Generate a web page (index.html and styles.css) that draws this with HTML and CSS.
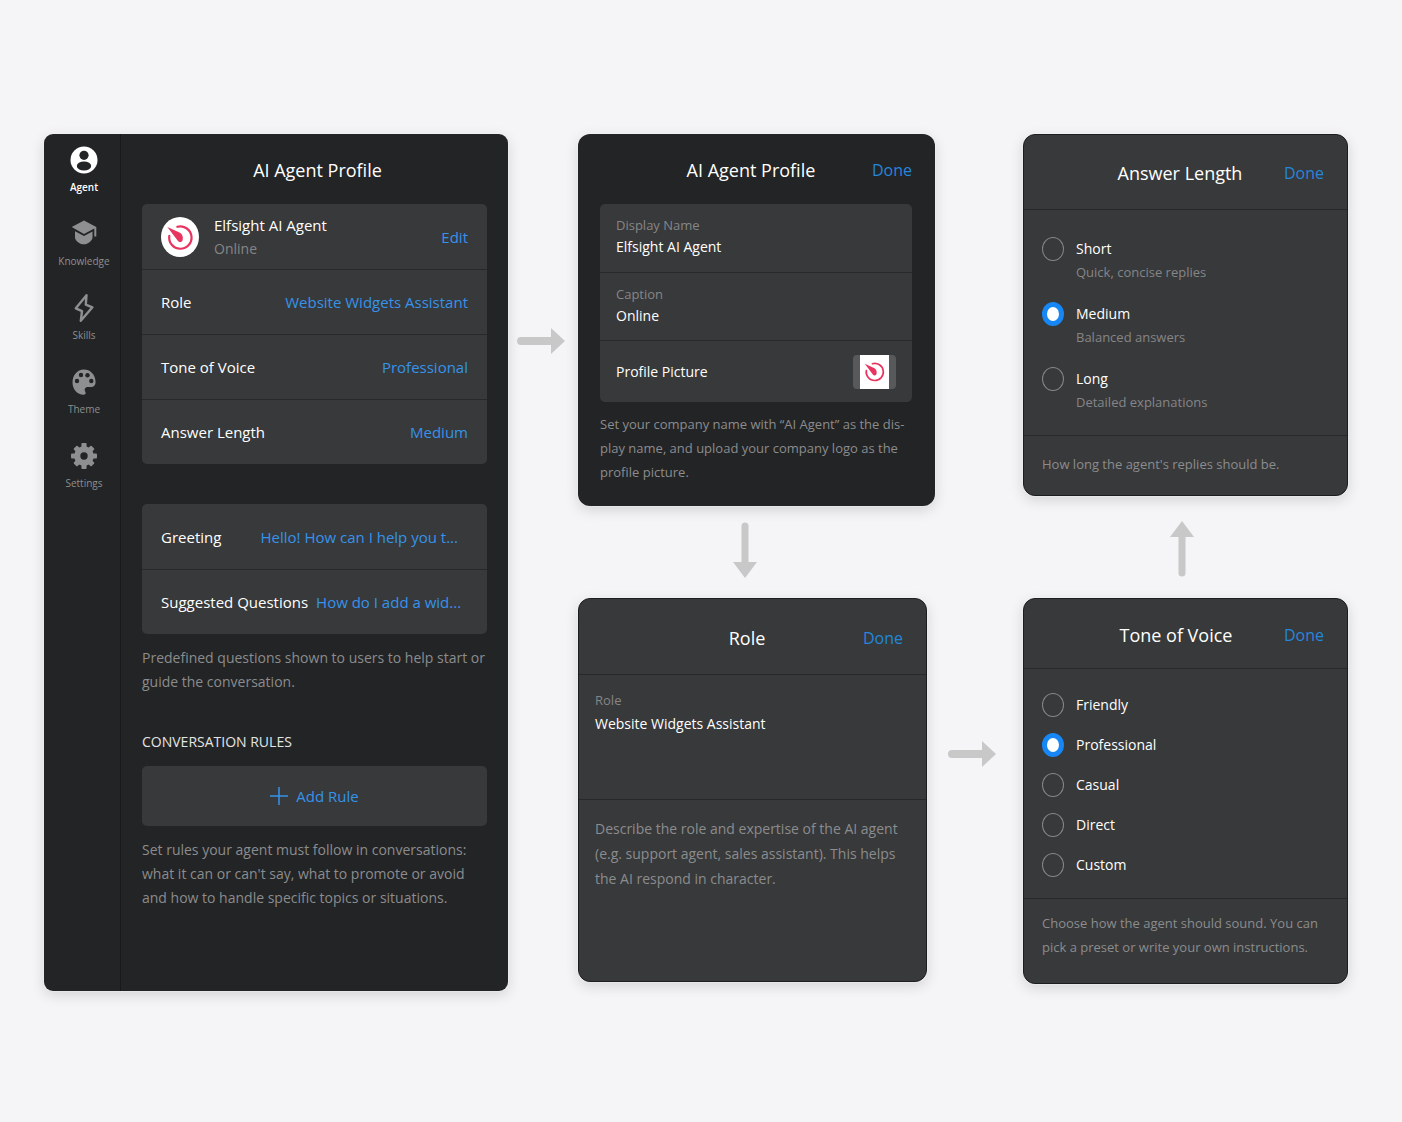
FILE: index.html
```html
<!DOCTYPE html>
<html lang="en">
<head>
<meta charset="utf-8">
<meta name="viewport" content="width=device-width, initial-scale=1">
<title>AI Agent Profile</title>
<link rel="stylesheet" href="styles.css">
</head>
<body>
<svg class="defs" aria-hidden="true">
  <symbol id="logo" viewBox="0 0 38 38">
    <path d="M16.300 8.800A11.200 11.200 0 1 1 8.300 17.800" fill="none" stroke="#e8355f" stroke-width="2.200" stroke-linecap="round"/>
    <path d="M6.300 9L19 14.800C21.600 16.300 22.600 20 21.400 22.800C20.400 24.600 18 24.600 16.800 22.800Z" fill="#e8355f"/>
  </symbol>
  <symbol id="arrow" viewBox="0 0 48 26">
    <path d="M4 13H35" stroke="#c8c8c9" stroke-width="8" stroke-linecap="round"/>
    <path d="M34 0L48 13L34 26Z" fill="#c8c8c9"/>
  </symbol>
  <symbol id="arrow-long" viewBox="0 0 56 24">
    <path d="M4 12H42" stroke="#c8c8c9" stroke-width="7" stroke-linecap="round"/>
    <path d="M40 0L56 12L40 24Z" fill="#c8c8c9"/>
  </symbol>
</svg>
<main class="flow">
  <section class="window agent">
    <nav class="sidebar" aria-label="Sections">
      <button class="tab tab-active" type="button">
        <svg class="tab-icon" viewBox="0 0 28 28"><circle cx="14" cy="14" r="13.500" fill="currentColor"/><circle cx="14" cy="9.300" r="4.600" fill="#232425"/><ellipse cx="14" cy="20" rx="7.200" ry="4.500" fill="#232425"/></svg>
        Agent
      </button>
      <button class="tab" type="button">
        <svg class="tab-icon" viewBox="0 0 28 28" fill="currentColor"><path d="M14 0.500L26.300 7V16.500H24.300V8.500L14 14L1.700 7Z"/><path d="M5 11.200L14 16L22.500 11.500V17.500C22.500 20.500 18 24.300 13.800 24.300C9.500 24.300 5 20.500 5 17.500Z"/></svg>
        Knowledge
      </button>
      <button class="tab" type="button">
        <svg class="tab-icon" viewBox="0 0 28 28" fill="none" stroke="currentColor" stroke-width="2.400" stroke-linejoin="round"><path d="M16.500 1.200L5.800 14.300L12 17.200L10.800 26.800L22.400 13.300L15.800 10.600Z"/></svg>
        Skills
      </button>
      <button class="tab" type="button">
        <svg class="tab-icon" viewBox="0 0 28 28"><path d="M14 1.500C7 1.500 2.500 7.500 2.500 14.500C2.500 21.500 7.500 26.800 13.500 26.800C15.800 26.800 16 25 15.300 23.800C13.800 20.800 15.500 19 18 19H21C24.500 19 25.800 16.500 25.500 13C25 6 20 1.500 14 1.500Z" fill="currentColor"/><g fill="#232425"><circle cx="11" cy="7" r="2.200"/><circle cx="17.500" cy="7.200" r="2.200"/><circle cx="7" cy="13" r="2.200"/><circle cx="21.300" cy="13" r="2.200"/></g></svg>
        Theme
      </button>
      <button class="tab" type="button">
        <svg class="tab-icon" viewBox="0 0 28 28"><g fill="currentColor"><circle cx="14" cy="14" r="9.800"/><rect x="11.400" y="1" width="5.200" height="26" rx="1"/><rect x="1" y="11.400" width="26" height="5.200" rx="1"/><g transform="rotate(45 14 14)"><rect x="11.400" y="1.500" width="5.200" height="25" rx="1"/><rect x="1.500" y="11.400" width="25" height="5.200" rx="1"/></g></g><circle cx="14" cy="14" r="3.700" fill="#232425"/></svg>
        Settings
      </button>
    </nav>
    <div class="agent-body">
      <header class="bar bar-plain"><h1 class="title">AI Agent Profile</h1></header>
      <div class="group">
        <div class="row">
          <span class="avatar"><svg class="avatar-logo"><use href="#logo"/></svg></span>
          <div class="identity"><div class="row-label">Elfsight AI Agent</div><div class="muted">Online</div></div>
          <button class="link" type="button">Edit</button>
        </div>
        <div class="row"><span class="row-label">Role</span><button class="link" type="button">Website Widgets Assistant</button></div>
        <div class="row"><span class="row-label">Tone of Voice</span><button class="link" type="button">Professional</button></div>
        <div class="row"><span class="row-label">Answer Length</span><button class="link" type="button">Medium</button></div>
      </div>
      <div class="group group-next">
        <div class="row row-cut"><span class="row-label">Greeting</span><button class="link" type="button">Hello! How can I help you t...</button></div>
        <div class="row row-tight"><span class="row-label">Suggested Questions</span><button class="link" type="button">How do I add a wid...</button></div>
      </div>
      <p class="hint">Predefined questions shown to users to help start or guide the conversation.</p>
      <h2 class="section-title">CONVERSATION RULES</h2>
      <button class="add" type="button">
        <svg class="plus" viewBox="0 0 18 18" stroke="currentColor" stroke-width="1.500"><path d="M9 0V18M0 9H18"/></svg>
        Add Rule
      </button>
      <p class="hint">Set rules your agent must follow in conversations: what it can or can't say, what to promote or avoid and how to handle specific topics or situations.</p>
    </div>
  </section>

  <div class="between between-first"><svg class="arrow"><use href="#arrow"/></svg></div>

  <div class="stack">
    <section class="window profile">
      <header class="bar bar-plain bar-profile"><h2 class="title">AI Agent Profile</h2><button class="link done" type="button">Done</button></header>
      <div class="group">
        <div class="field"><label class="muted" for="name">Display Name</label><input class="text" id="name" type="text" value="Elfsight AI Agent"></div>
        <div class="field"><label class="muted" for="caption">Caption</label><input class="text" id="caption" type="text" value="Online"></div>
        <div class="row row-picture"><span class="text">Profile Picture</span><button class="thumb" type="button" aria-label="Change profile picture"><span class="thumb-image"><svg class="thumb-logo"><use href="#logo"/></svg></span></button></div>
      </div>
      <p class="hint">Set your company name with “AI Agent” as the dis&shy;play name, and upload your company logo as the profile picture.</p>
    </section>
    <div class="below below-profile"><svg class="arrow arrow-down"><use href="#arrow-long"/></svg></div>
    <section class="window panel role">
      <header class="bar"><h2 class="title">Role</h2><button class="link done" type="button">Done</button></header>
      <div class="role-field"><label class="muted" for="role">Role</label><textarea class="text role-text" id="role" rows="3">Website Widgets Assistant</textarea></div>
      <p class="hint">Describe the role and expertise of the AI agent (e.g. support agent, sales assistant). This helps the AI respond in character.</p>
    </section>
  </div>

  <div class="between between-second"><svg class="arrow"><use href="#arrow"/></svg></div>

  <div class="stack">
    <section class="window panel length">
      <header class="bar"><h2 class="title">Answer Length</h2><button class="link done" type="button">Done</button></header>
      <div class="options">
        <label class="option"><input class="radio" type="radio" name="length"><span class="text">Short<small class="muted note">Quick, concise replies</small></span></label>
        <label class="option"><input class="radio" type="radio" name="length" checked><span class="text">Medium<small class="muted note">Balanced answers</small></span></label>
        <label class="option"><input class="radio" type="radio" name="length"><span class="text">Long<small class="muted note">Detailed explanations</small></span></label>
      </div>
      <p class="hint">How long the agent's replies should be.</p>
    </section>
    <div class="below below-length"><svg class="arrow arrow-up"><use href="#arrow-long"/></svg></div>
    <section class="window panel tone">
      <header class="bar"><h2 class="title">Tone of Voice</h2><button class="link done" type="button">Done</button></header>
      <div class="options">
        <label class="option"><input class="radio" type="radio" name="tone"><span class="text">Friendly</span></label>
        <label class="option"><input class="radio" type="radio" name="tone" checked><span class="text">Professional</span></label>
        <label class="option"><input class="radio" type="radio" name="tone"><span class="text">Casual</span></label>
        <label class="option"><input class="radio" type="radio" name="tone"><span class="text">Direct</span></label>
        <label class="option"><input class="radio" type="radio" name="tone"><span class="text">Custom</span></label>
      </div>
      <p class="hint">Choose how the agent should sound. You can pick a preset or write your own instructions.</p>
    </section>
  </div>
</main>
</body>
</html>
```

FILE: styles.css
```css
* { box-sizing: border-box; }

body {
  margin: 0;
  min-height: 100vh;
  background: #f5f5f7;
  color: #fff;
  font-family: "Open Sans", "Noto Sans", sans-serif;
  font-size: 15px;
  line-height: 24px;
}

h1, h2, p { margin: 0; font-weight: 400; }

button, input, textarea {
  margin: 0;
  padding: 0;
  border: 0;
  background: none;
  color: inherit;
  font: inherit;
}

button { cursor: pointer; }

.defs { display: none; }

.flow {
  display: grid;
  grid-template-columns: minmax(0, 464fr) 70px minmax(0, 357fr) 88px minmax(0, 325fr);
  align-items: start;
  padding: 134px 54px 131px 44px;
}

.window {
  border-radius: 12px;
  background: #232425;
  box-shadow: 0 0 2px #fff, 0 4px 14px rgba(0, 0, 0, 0.14);
}

.stack { display: flex; flex-direction: column; }

/* Arrows between the windows */
.arrow { display: block; width: 48px; height: 26px; }
.arrow-down { transform: rotate(90deg); }
.arrow-up { transform: rotate(-90deg); }
.between { display: flex; }
.between-first { padding: 194px 0 0 9px; }
.between-second { padding: 607px 0 0 13px; }
.below { display: flex; align-items: center; justify-content: center; }
.below .arrow { width: 56px; height: 24px; }
.below-profile { height: 92px; padding: 0 24px 4px 0; }
.below-length { height: 102px; padding: 4px 8px 0 0; }

/* Title bars */
.bar {
  display: flex;
  align-items: center;
  padding: 2px 23px 0 52px;
  border-bottom: 1px solid #27282a;
}
.bar-plain { height: 70px; padding: 2px 0 0 6px; border: 0; }
.bar-profile { padding-left: 30px; }
.title { flex: 1; font-size: 18px; text-align: center; }
.link { color: #3593ea; text-align: right; white-space: nowrap; }
.done { font-size: 16px; color: #2486dc; }

.muted { color: #858688; font-size: 14px; }
.hint { color: #8b8c8e; font-size: 14px; }
.stack .muted, .stack .hint { font-size: 13px; }

/* Agent window */
.agent { display: flex; min-height: 857px; border-radius: 9px; }
.sidebar {
  display: flex;
  flex-direction: column;
  gap: 25px;
  flex: none;
  width: 77px;
  padding: 12px 0;
  border-right: 1px solid #18191a;
}
.tab {
  display: flex;
  flex-direction: column;
  align-items: center;
  gap: 5px;
  padding: 0 0 0 4px;
  color: #8e8f90;
  font-size: 10px;
  font-weight: 500;
  line-height: 16px;
}
.tab-active { color: #fff; font-weight: 600; }
.tab-icon { width: 28px; height: 28px; }

.agent-body { flex: 1; min-width: 0; padding: 0 21px 24px; }
.group { border-radius: 5px; background: #38393a; }
.group-next { margin-top: 40px; }
.row {
  display: flex;
  align-items: center;
  justify-content: space-between;
  height: 65px;
  padding: 0 19px;
}
.row + .row, .field + .field, .field + .row { border-top: 1px solid #28292a; }
.row-cut { padding-right: 29px; }
.row-tight { justify-content: flex-start; gap: 8px; }
.row-label { white-space: nowrap; }
.identity { flex: 1; padding-left: 15px; }
.avatar {
  display: grid;
  place-items: center;
  width: 38px;
  height: 40px;
  border-radius: 50%;
  background: #fff;
}
.avatar-logo { width: 38px; height: 38px; }
.group + .hint, .add + .hint { margin-top: 12px; }
.section-title { margin: 36px 0 12px; font-size: 14px; color: #e4e4e4; }
.add {
  display: flex;
  align-items: center;
  justify-content: center;
  gap: 8px;
  width: 100%;
  height: 60px;
  border-radius: 5px;
  background: #38393a;
  color: #3593ea;
}
.plus { width: 18px; height: 18px; }

/* Profile window */
.profile { padding: 0 23px 22px 22px; }
.field { display: flex; flex-direction: column; height: 68px; padding: 10px 16px 0; line-height: 22px; }
.text { font-size: 14px; }
.field .text { width: 100%; height: 22px; }
.row-picture { height: 62px; padding: 0 16px; }
.profile .group + .hint { margin-top: 10px; }
.thumb {
  display: flex;
  justify-content: center;
  width: 43px;
  height: 34px;
  border-radius: 4px;
  background: #58595a;
}
.thumb-image { display: grid; place-items: center; width: 29px; height: 34px; background: #fff; }
.thumb-logo { width: 29px; height: 31px; }

/* Editor panels */
.panel { border: 1px solid #1c1d1e; background: #38393a; }
.role { margin-right: 8px; }
.role .bar { height: 76px; }
.role-field {
  display: flex;
  flex-direction: column;
  height: 125px;
  padding: 13px 16px 0;
  border-bottom: 1px solid #27282a;
}
.role-text { width: 100%; resize: none; }
.role .hint { padding: 16px 20px 90px 16px; font-size: 14px; line-height: 25px; }

.options { display: flex; flex-direction: column; border-bottom: 1px solid #27282a; }
.option { display: flex; gap: 12px; }
.note { display: block; line-height: 22px; }
.radio {
  appearance: none;
  flex: none;
  width: 22px;
  height: 24px;
  border: 1px solid #858688;
  border-radius: 50%;
}
.radio:checked { border: 5px solid #1687f5; background: #fff; }

.length .bar { height: 75px; }
.length .options { gap: 19px; padding: 27px 18px 22px; }
.length .hint { padding: 16px 18px 19px; }

.tone .bar { height: 70px; padding-left: 44px; }
.tone .options { gap: 16px; padding: 24px 18px 21px; }
.tone .hint { padding: 12px 18px 24px; }
```
